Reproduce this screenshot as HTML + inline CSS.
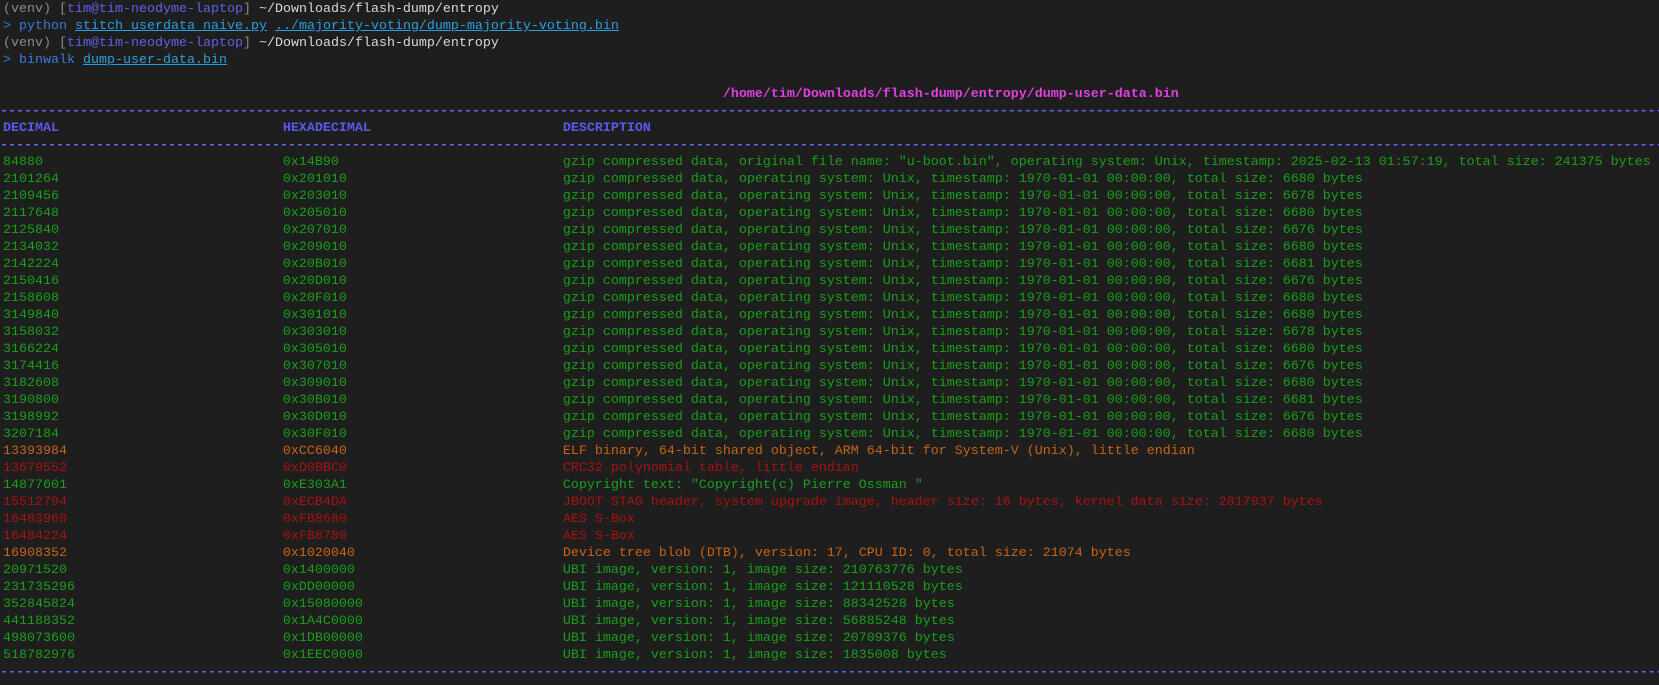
<!DOCTYPE html><html><head><meta charset="utf-8"><style>
body{margin:0;background:#1e1e1e;width:1659px;height:685px;overflow:hidden}
pre{margin:0;padding:1px 0 0 3px;font-family:"Liberation Mono",monospace;font-size:13.33px;line-height:17px;color:#d8d8d8;white-space:pre}
.g{color:#18a018}.o{color:#c86414}.r{color:#a81212}.h{color:#5a5af0;font-weight:bold}.d{color:#6464ff;display:block;overflow:hidden;margin-left:-3px;font-weight:bold}
.gr{color:#8a8a8a}.pu{color:#6060e8}.b{color:#3a7ad8}.l{color:#2aa0e0;text-decoration:underline}.m{color:#e040e0;font-weight:bold}
</style></head><body><pre><span class="gr">(venv) [</span><span class="pu">tim@tim-neodyme-laptop</span><span class="gr">]</span> ~/Downloads/flash-dump/entropy
<span class="b">&gt; python</span> <span class="l">stitch_userdata_naive.py</span> <span class="l">../majority-voting/dump-majority-voting.bin</span>
<span class="gr">(venv) [</span><span class="pu">tim@tim-neodyme-laptop</span><span class="gr">]</span> ~/Downloads/flash-dump/entropy
<span class="b">&gt; binwalk</span> <span class="l">dump-user-data.bin</span>

                                                                                          <span class="m">/home/tim/Downloads/flash-dump/entropy/dump-user-data.bin</span>
<span class="d">----------------------------------------------------------------------------------------------------------------------------------------------------------------------------------------------------------------------------------------------</span><span class="h">DECIMAL                            HEXADECIMAL                        DESCRIPTION</span>
<span class="d">----------------------------------------------------------------------------------------------------------------------------------------------------------------------------------------------------------------------------------------------</span><span class="g">84880                              0x14B90                            gzip compressed data, original file name: "u-boot.bin", operating system: Unix, timestamp: 2025-02-13 01:57:19, total size: 241375 bytes
2101264                            0x201010                           gzip compressed data, operating system: Unix, timestamp: 1970-01-01 00:00:00, total size: 6680 bytes
2109456                            0x203010                           gzip compressed data, operating system: Unix, timestamp: 1970-01-01 00:00:00, total size: 6678 bytes
2117648                            0x205010                           gzip compressed data, operating system: Unix, timestamp: 1970-01-01 00:00:00, total size: 6680 bytes
2125840                            0x207010                           gzip compressed data, operating system: Unix, timestamp: 1970-01-01 00:00:00, total size: 6676 bytes
2134032                            0x209010                           gzip compressed data, operating system: Unix, timestamp: 1970-01-01 00:00:00, total size: 6680 bytes
2142224                            0x20B010                           gzip compressed data, operating system: Unix, timestamp: 1970-01-01 00:00:00, total size: 6681 bytes
2150416                            0x20D010                           gzip compressed data, operating system: Unix, timestamp: 1970-01-01 00:00:00, total size: 6676 bytes
2158608                            0x20F010                           gzip compressed data, operating system: Unix, timestamp: 1970-01-01 00:00:00, total size: 6680 bytes
3149840                            0x301010                           gzip compressed data, operating system: Unix, timestamp: 1970-01-01 00:00:00, total size: 6680 bytes
3158032                            0x303010                           gzip compressed data, operating system: Unix, timestamp: 1970-01-01 00:00:00, total size: 6678 bytes
3166224                            0x305010                           gzip compressed data, operating system: Unix, timestamp: 1970-01-01 00:00:00, total size: 6680 bytes
3174416                            0x307010                           gzip compressed data, operating system: Unix, timestamp: 1970-01-01 00:00:00, total size: 6676 bytes
3182608                            0x309010                           gzip compressed data, operating system: Unix, timestamp: 1970-01-01 00:00:00, total size: 6680 bytes
3190800                            0x30B010                           gzip compressed data, operating system: Unix, timestamp: 1970-01-01 00:00:00, total size: 6681 bytes
3198992                            0x30D010                           gzip compressed data, operating system: Unix, timestamp: 1970-01-01 00:00:00, total size: 6676 bytes
3207184                            0x30F010                           gzip compressed data, operating system: Unix, timestamp: 1970-01-01 00:00:00, total size: 6680 bytes</span>
<span class="o">13393984                           0xCC6040                           ELF binary, 64-bit shared object, ARM 64-bit for System-V (Unix), little endian</span>
<span class="r">13679552                           0xD0BBC0                           CRC32 polynomial table, little endian</span>
<span class="g">14877601                           0xE303A1                           Copyright text: "Copyright(c) Pierre Ossman "</span>
<span class="r">15512794                           0xECB4DA                           JBOOT STAG header, system upgrade image, header size: 16 bytes, kernel data size: 2817937 bytes
16483968                           0xFB8680                           AES S-Box
16484224                           0xFB8780                           AES S-Box</span>
<span class="o">16908352                           0x1020040                          Device tree blob (DTB), version: 17, CPU ID: 0, total size: 21074 bytes</span>
<span class="g">20971520                           0x1400000                          UBI image, version: 1, image size: 210763776 bytes
231735296                          0xDD00000                          UBI image, version: 1, image size: 121110528 bytes
352845824                          0x15080000                         UBI image, version: 1, image size: 88342528 bytes
441188352                          0x1A4C0000                         UBI image, version: 1, image size: 56885248 bytes
498073600                          0x1DB00000                         UBI image, version: 1, image size: 20709376 bytes
518782976                          0x1EEC0000                         UBI image, version: 1, image size: 1835008 bytes</span>
<span class="d">----------------------------------------------------------------------------------------------------------------------------------------------------------------------------------------------------------------------------------------------</span></pre></body></html>
